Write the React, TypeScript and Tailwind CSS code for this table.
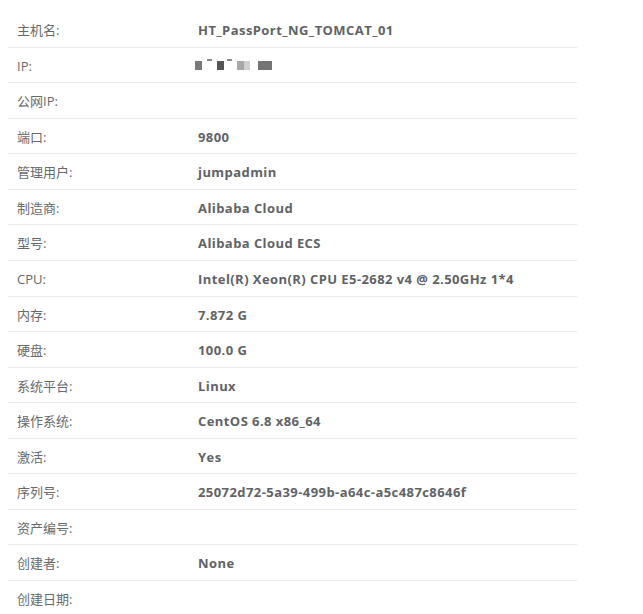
const ROWS: [string, string][] = [
  ['主机名:', 'HT_PassPort_NG_TOMCAT_01'],
  ['IP:', '__ip__'],
  ['公网IP:', ''],
  ['端口:', '9800'],
  ['管理用户:', 'jumpadmin'],
  ['制造商:', 'Alibaba Cloud'],
  ['型号:', 'Alibaba Cloud ECS'],
  ['CPU:', 'Intel(R) Xeon(R) CPU E5-2682 v4 @ 2.50GHz 1*4'],
  ['内存:', '7.872 G'],
  ['硬盘:', '100.0 G'],
  ['系统平台:', 'Linux'],
  ['操作系统:', 'CentOS 6.8 x86_64'],
  ['激活:', 'Yes'],
  ['序列号:', '25072d72-5a39-499b-a64c-a5c487c8646f'],
  ['资产编号:', ''],
  ['创建者:', 'None'],
  ['创建日期:', ''],
]

// masked IP, drawn as the blurred blocks in the screenshot
function MaskedIp() {
  return (
    <div className="flex h-[18px] items-start pt-[2px]">
      <span className="ml-[-3px] mt-[2px] h-[9px] w-[7px] bg-[#7a7a7a]" />
      <span className="ml-[5px] h-[2px] w-[5px] bg-[#8a8a8a]" />
      <span className="ml-[5px] mt-[2px] h-[9px] w-[7px] bg-[#555]" />
      <span className="ml-[3px] h-[2px] w-[5px] bg-[#8a8a8a]" />
      <span className="ml-[5px] mt-[2px] h-[9px] w-[7px] bg-[#a8a8a8]" />
      <span className="mt-[2px] h-[9px] w-[6px] bg-[#d0d0d0]" />
      <span className="ml-[8px] mt-[2px] h-[9px] w-[14px] bg-[#747474]" />
    </div>
  )
}

export default function App() {
  return (
    <div className="min-h-screen bg-white pt-[12px] pl-[8px] font-['Open_Sans','Noto_Sans_CJK_SC',sans-serif] text-[13px] leading-[1.42857] text-[#676a6c]">
      <table className="w-[569px] border-collapse">
        <tbody>
          {ROWS.map(([label, value], i) => (
            <tr key={label} className={i === 0 ? '' : 'border-t border-[#e7eaec]'}>
              <td className="w-[182px] px-[9px] pt-[9px] pb-[7px] align-top">{label}</td>
              <td className="px-[8px] pt-[9px] pb-[7px] align-top font-bold tracking-[0.43px] text-[#606366]">
                {value === '__ip__' ? <MaskedIp /> : value}
              </td>
            </tr>
          ))}
        </tbody>
      </table>
    </div>
  )
}
